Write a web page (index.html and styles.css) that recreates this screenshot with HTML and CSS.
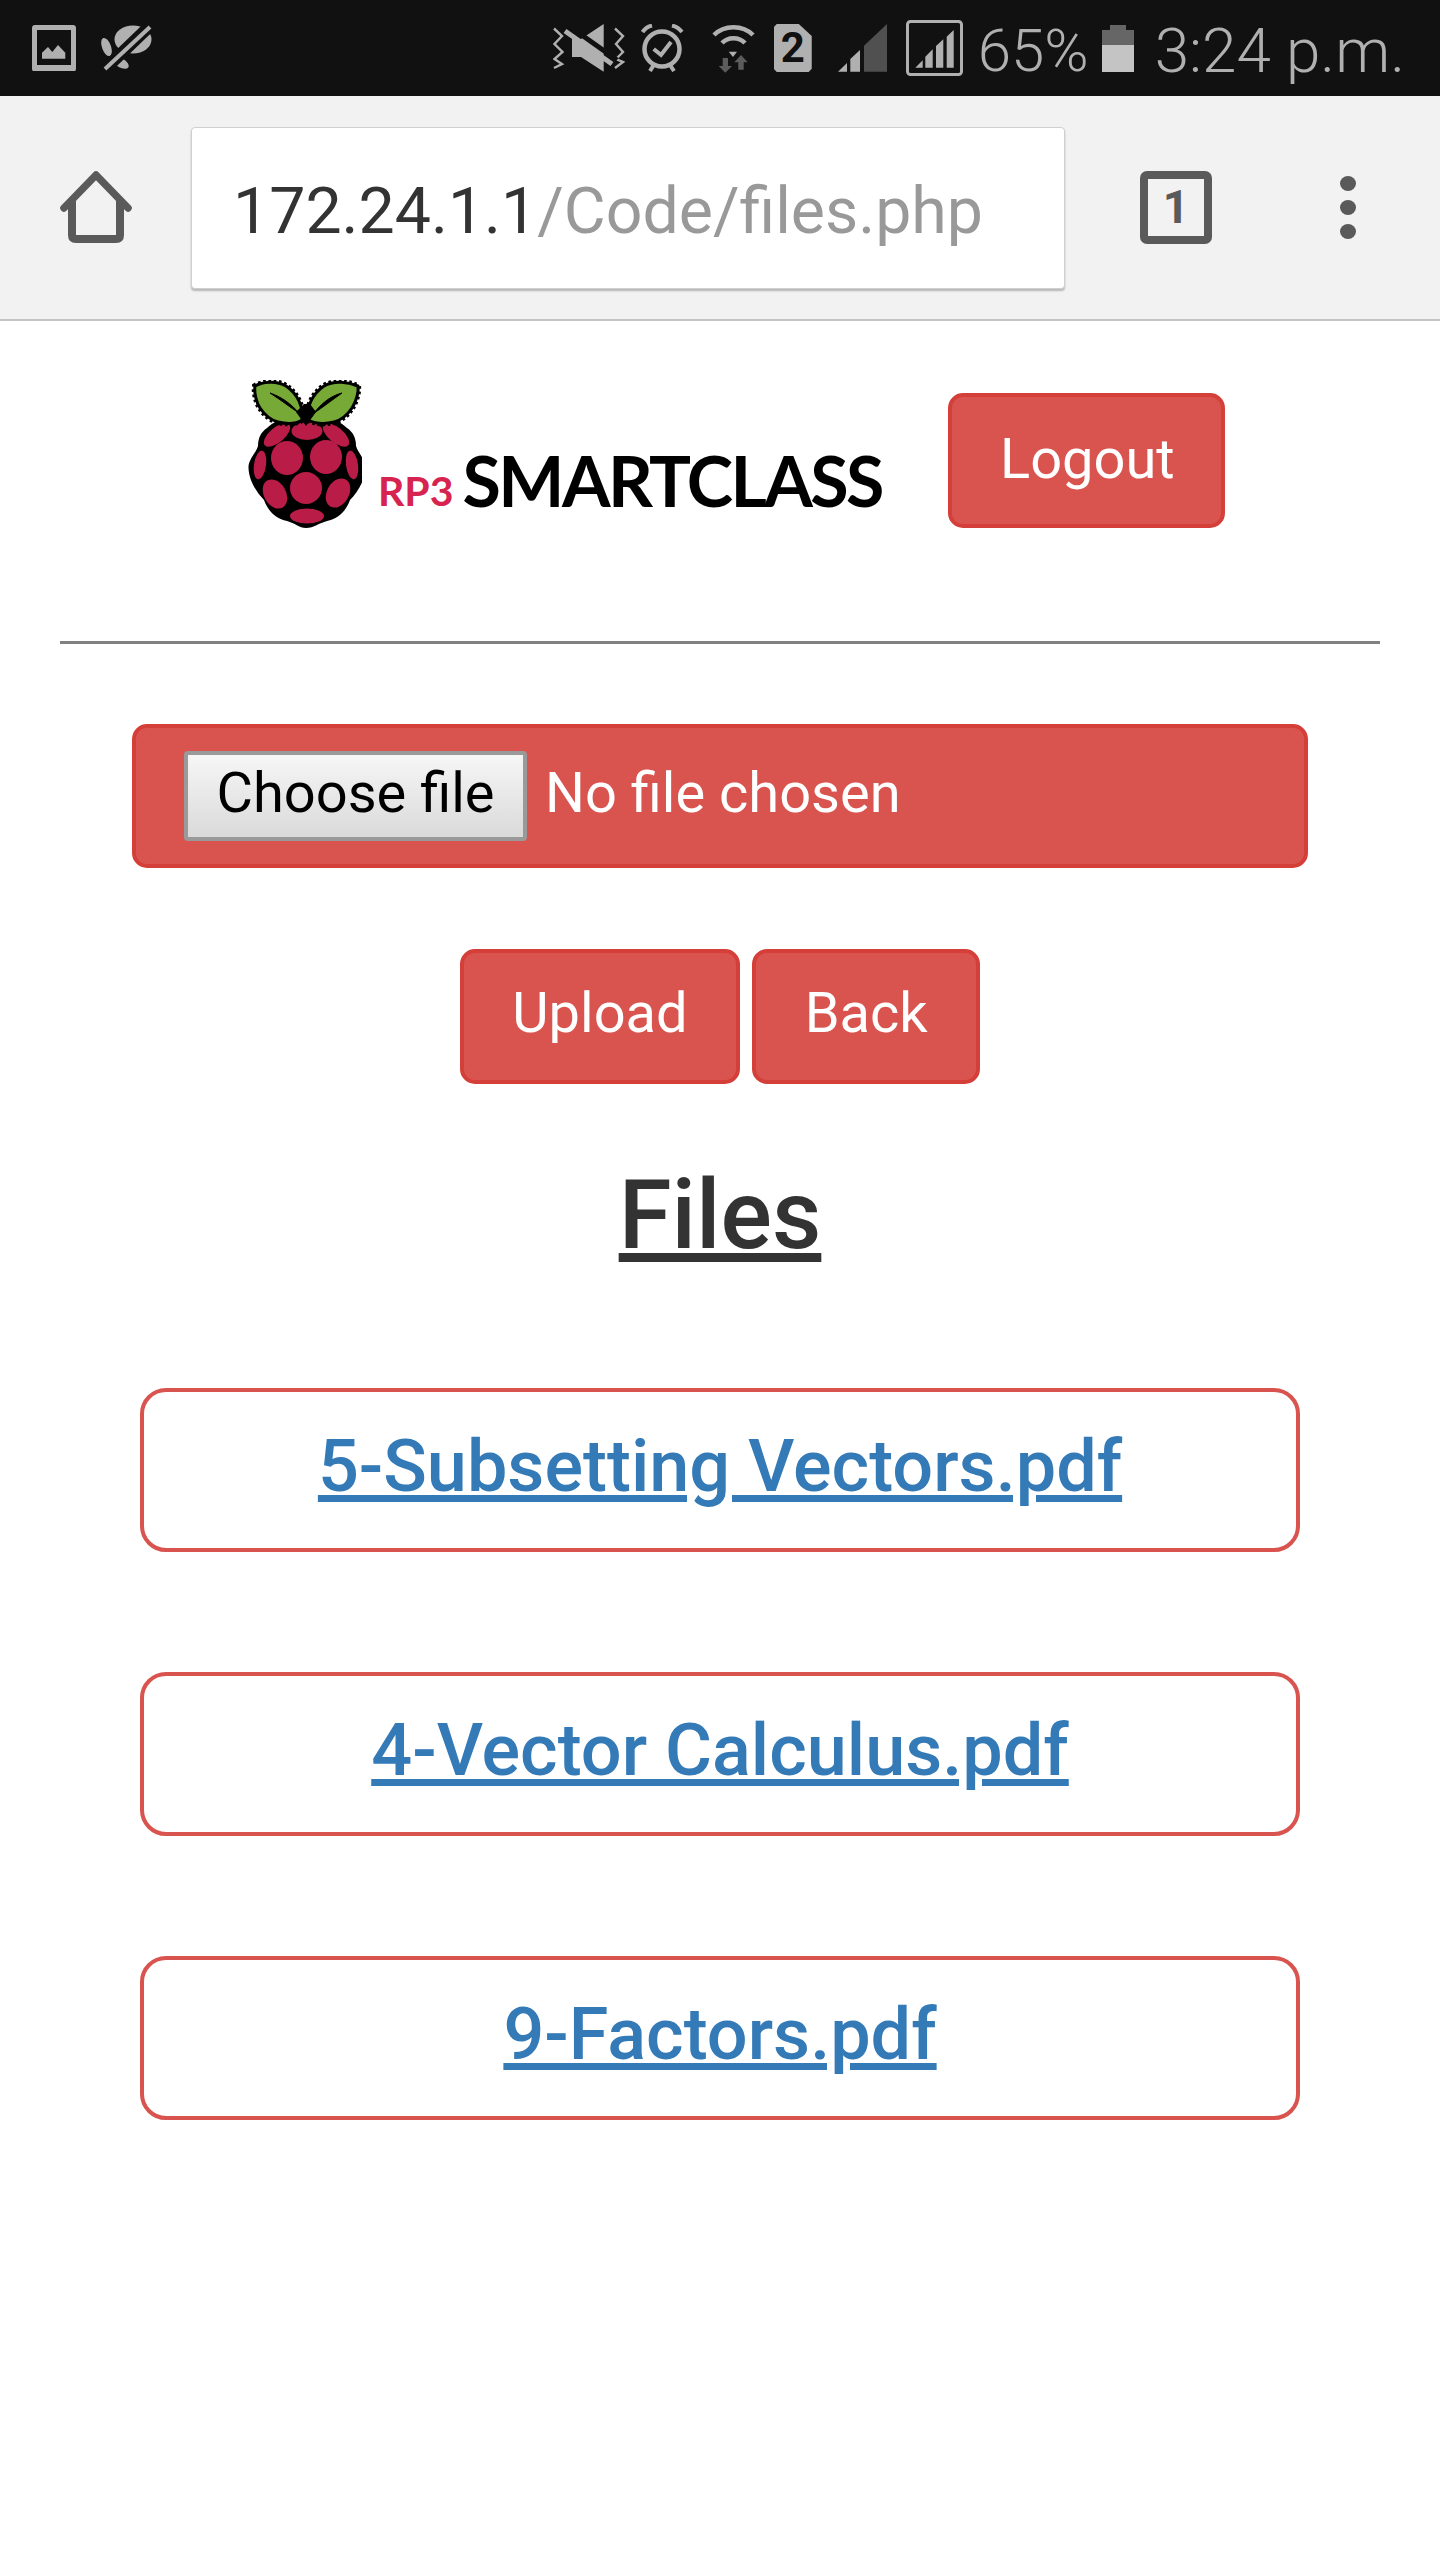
FILE: index.html
```html
<!DOCTYPE html>
<html lang="en">
<head>
<meta charset="utf-8">
<title>Files</title>
<link rel="stylesheet" href="styles.css">
</head>
<body>
<header class="status-bar">
  <div class="status-left">
    <svg class="ic ic-image" viewBox="0 0 44 46.700"><path fill-rule="evenodd" d="M3 0h38q3 0 3 3v40.700q0 3-3 3H3q-3 0-3-3V3q0-3 3-3zM5 5v35h34V5z" fill="#b0b0b0"/><path d="M10 33.700v-6L16 22l4.300 5L26 20l7.300 7.700v6z" fill="#b0b0b0"/></svg>
    <svg class="ic ic-leaf" viewBox="0 0 52 46.700"><ellipse cx="33" cy="14.500" rx="18.500" ry="14" fill="#b0b0b0"/><ellipse cx="6.500" cy="22" rx="4.500" ry="9.500" transform="rotate(-20 6.500 22)" fill="#b0b0b0"/><ellipse cx="21" cy="38" rx="8.500" ry="4.500" transform="rotate(30 21 38)" fill="#b0b0b0"/><path d="M2 47L54 -3" stroke="#111" stroke-width="12"/><path d="M5 44L50 2" stroke="#b0b0b0" stroke-width="4"/></svg>
  </div>
  <div class="status-right">
    <svg class="ic ic-mute" viewBox="0 0 72 48"><path d="M1 4.500L9 12 1.500 20l8 8-8 7L9 40l-8 4M62 4.500l8 7.500-7 8 7 8-7 7 7 3-8 6" fill="none" stroke="#b0b0b0" stroke-width="2.400"/><path d="M19 15h9L50.700 0v47.700L28 33h-9z" fill="#b0b0b0"/><path d="M16 2L64 36" stroke="#111" stroke-width="5"/><path d="M12 7L59 40" stroke="#b0b0b0" stroke-width="5"/></svg>
    <svg class="ic ic-alarm" viewBox="0 0 43 48"><circle cx="21" cy="25" r="17.500" fill="none" stroke="#b0b0b0" stroke-width="4.500"/><path d="M12.700 25l7.300 6 10-13" fill="none" stroke="#b0b0b0" stroke-width="4"/><path d="M1.500 8Q5 3 11 1.500M41 8Q37 3 31 1.500M12.700 41L9 47M29 41l4 6" fill="none" stroke="#b0b0b0" stroke-width="4"/></svg>
    <svg class="ic ic-wifi" viewBox="0 0 43 49"><path d="M2 11C12 .5 31 .5 41 11M10 19C16 12.500 27 12.500 33 19" fill="none" stroke="#b0b0b0" stroke-width="4.500"/><path d="M16.700 27.700h8.300L21 33z" fill="#b0b0b0"/><path d="M10.700 34H16v8h4l-6.700 6.700L6.700 42h4zM26.300 45.700v-7.400h-4L29 31l6.700 7.300h-4v7.400z" fill="#5c5c5c"/></svg>
    <span class="sim">2</span>
    <svg class="ic ic-signal" viewBox="0 0 49 47.700"><path d="M26 21.700L49 0v47.700H26z" fill="#505050"/><path d="M0 47.700L9 39v8.700zM12.300 47.700V35L22 26v21.700z" fill="#b0b0b0"/></svg>
    <svg class="ic ic-signal-box" viewBox="0 0 57 56"><rect x="1.500" y="1.500" width="54" height="53" rx="3" fill="none" stroke="#b0b0b0" stroke-width="3"/><path d="M9.300 47.700l7.400-7.400v7.400zM19.300 47.700v-11l7.400-7.400v18.400zM30 47.700V26l7.300-6.700v28.400zM40.700 47.700v-31l7-6.700v37.700z" fill="#b0b0b0"/></svg>
    <span class="status-text status-pct">65%</span>
    <span class="battery"><span class="battery-empty"></span></span>
    <span class="status-text status-time">3:24 p.m.</span>
  </div>
</header>

<nav class="toolbar">
  <svg class="home" viewBox="0 0 72 73"><path d="M4 37L36 4l32 33" fill="none" stroke="#5a5a5a" stroke-width="7.500" stroke-linecap="round" stroke-linejoin="round"/><path d="M12 30v34q0 4 4 4h40q4 0 4-4V30" fill="none" stroke="#5a5a5a" stroke-width="8"/></svg>
  <div class="url"><span class="url-host">172.24.1.1</span><span class="url-path">/Code/files.php</span></div>
  <span class="tabs">1</span>
  <span class="menu"><i></i><i></i><i></i></span>
</nav>

<main class="page">
  <div class="top-row">
    <div class="logo">
      <svg class="berry" viewBox="0 0 114 149">
        <path d="M58 148c-7 0-11-5-19-7-11-2-19-10-23-21C9 113 1 101 .5 88 0 80 8 73 10 66c0-8 3-14 9-18 6-6 14-9 22-11 6-2 12-2 18-2s12 0 18 2c8 2 16 5 22 11 6 4 9 10 9 18 2 7 10 14 9.500 22-.5 13-8.500 25-15.500 32-4 11-12 19-23 21-8 2-13 7-21 7z" fill="#000"/>
        <g fill="#b91c47">
          <ellipse cx="59" cy="51" rx="15.500" ry="9"/>
          <ellipse cx="29" cy="55" rx="16" ry="7.500" transform="rotate(-40 29 55)"/>
          <ellipse cx="88" cy="55" rx="16" ry="7.500" transform="rotate(40 88 55)"/>
          <ellipse cx="39" cy="78" rx="16" ry="17"/>
          <ellipse cx="78" cy="77" rx="16" ry="17"/>
          <ellipse cx="12" cy="85" rx="6" ry="14.500" transform="rotate(8 12 85)"/>
          <ellipse cx="104" cy="85" rx="6" ry="14.500" transform="rotate(-8 104 85)"/>
          <circle cx="58" cy="108" r="16"/>
          <ellipse cx="27" cy="114" rx="11" ry="15.500" transform="rotate(-30 27 114)"/>
          <ellipse cx="90" cy="113" rx="11" ry="15.500" transform="rotate(30 90 113)"/>
          <ellipse cx="59" cy="136" rx="17" ry="7.500"/>
        </g>
        <g>
          <path class="leaf-teeth" d="M54 40C56 28 50 14 38 6 28 0 14 2 7 6 6 12 8 22 12 28 16 34 22 40 30 42 38 44 48 44 54 40Z"/>
          <path class="leaf" d="M54 40C56 28 50 14 38 6 28 0 14 2 7 6 6 12 8 22 12 28 16 34 22 40 30 42 38 44 48 44 54 40Z"/>
          <path class="leaf-teeth" d="M60 40C58 28 64 14 76 6 86 0 100 2 110 6 111 12 108 22 104 28 100 34 94 40 86 42 78 44 68 44 60 40Z"/>
          <path class="leaf" d="M60 40C58 28 64 14 76 6 86 0 100 2 110 6 111 12 108 22 104 28 100 34 94 40 86 42 78 44 68 44 60 40Z"/>
          <path d="M22 13C34 17 43 24 51 33 43 28 33 20 22 13zM94 13C82 16 73 24 66 33 74 28 84 20 94 13z" fill="#000" stroke="#000"/>
          <path d="M48 32L58 46 68 32 62 24 56 24z" fill="#000"/>
        </g>
      </svg>
      <span class="rp3">RP3</span>
      <span class="brand">SMARTCLASS</span>
    </div>
    <button class="btn" type="button">Logout</button>
  </div>
  <hr class="rule">
  <form class="upload-form">
    <div class="file-bar">
      <button class="choose" type="button">Choose file</button>
      <span class="no-file">No file chosen</span>
    </div>
    <div class="actions">
      <button class="btn" type="button">Upload</button>
      <button class="btn" type="button">Back</button>
    </div>
  </form>
  <h3 class="title">Files</h3>
  <ul class="files">
    <li class="file-card"><a href="#">5-Subsetting Vectors.pdf</a></li>
    <li class="file-card"><a href="#">4-Vector Calculus.pdf</a></li>
    <li class="file-card"><a href="#">9-Factors.pdf</a></li>
  </ul>
</main>
</body>
</html>
```

FILE: styles.css
```css
* { box-sizing: border-box; }
html, body { margin: 0; padding: 0; }
body {
  width: 1440px;
  height: 2560px;
  background: #fff;
  font-family: Roboto, "Liberation Sans", sans-serif;
  color: #333;
  overflow: hidden;
}

/* status bar */
.status-bar {
  height: 96px;
  background: #111;
  display: flex;
  justify-content: space-between;
  align-items: center;
  padding: 0 35px 0 32px;
}
.status-left, .status-right { display: flex; align-items: center; }
.ic { display: block; flex: none; }
.ic-image { width: 44px; height: 46.700px; margin-right: 24px; }
.ic-leaf { width: 52px; height: 46.700px; }
.ic-mute { width: 72px; height: 48px; margin-right: 16px; }
.ic-alarm { width: 43px; height: 48px; margin-right: 28px; }
.ic-wifi { width: 43px; height: 49px; margin-right: 19px; }
.sim {
  width: 38px;
  height: 48px;
  margin-right: 26px;
  background: #b0b0b0;
  color: #111;
  clip-path: polygon(8% 0, 66% 0, 100% 25%, 100% 93%, 92% 100%, 8% 100%, 0 93%, 0 7%);
  font-size: 42px;
  font-weight: 700;
  line-height: 48px;
  text-align: center;
}
.ic-signal { width: 49px; height: 47.700px; margin-right: 19px; }
.ic-signal-box { width: 57px; height: 56px; margin-right: 15px; }
.status-text { color: #b0b0b0; font-size: 60px; font-weight: 300; line-height: 70px; padding-top: 5px; }
.status-time { font-size: 62px; }
.status-pct { margin-right: 13px; }
.battery {
  width: 32px;
  height: 42px;
  margin: 5px 21px 0 0;
  background: #c4c4c4;
  position: relative;
}
.battery::before {
  content: "";
  position: absolute;
  left: 8px;
  top: -5px;
  width: 16px;
  height: 5px;
  background: #666;
}
.battery-empty { display: block; height: 15px; background: #666; }

/* browser toolbar */
.toolbar {
  height: 225px;
  background: #f2f2f2;
  border-bottom: 2px solid #c4c4c4;
  display: flex;
  align-items: center;
  padding: 0 0 0 60px;
}
.home { width: 72px; height: 73px; flex: none; margin-right: 59px; }
.url {
  width: 874px;
  height: 162px;
  background: #fff;
  border: 1px solid #d0d0d0;
  border-radius: 4px;
  box-shadow: 0 2px 2px rgba(0,0,0,.25);
  padding-left: 41px;
  font-size: 64.400px;
  line-height: 166px;
  white-space: nowrap;
  margin-right: 75px;
}
.url-host { color: #333; }
.url-path { color: #999; }
.tabs {
  width: 72px;
  height: 73px;
  flex: none;
  border: 8px solid #5a5a5a;
  border-radius: 7px;
  color: #5a5a5a;
  font-size: 46px;
  font-weight: 700;
  line-height: 56px;
  text-align: center;
  margin-right: 128px;
}
.menu { display: flex; flex-direction: column; gap: 9px; }
.menu i { display: block; width: 16px; height: 15px; border-radius: 50%; background: #5a5a5a; }

/* page */
.page { padding: 59px 60px 0; }
.top-row { display: flex; align-items: flex-start; padding-left: 188px; }
.logo { display: flex; align-items: flex-end; width: 700px; height: 149px; }
.berry { width: 114px; height: 149px; flex: none; margin-right: 16px; }
.leaf { fill: #76a935; stroke: #000; stroke-width: 3; stroke-linejoin: round; }
.leaf-teeth { fill: #000; stroke: #000; stroke-width: 6; stroke-dasharray: 2.500 2.500; }
.rp3 {
  color: #d6234f;
  font-family: Lato, sans-serif;
  font-weight: 700;
  font-size: 41px;
  line-height: 50px;
  margin: 0 9px 13px 0;
}
.brand {
  color: #000;
  font-family: Lato, sans-serif;
  font-weight: 700;
  font-size: 70px;
  line-height: 80px;
  margin-bottom: 9px;
  letter-spacing: -2.600px;
}
.btn {
  height: 135px;
  padding: 0 46px 3px 48px;
  background: #d9534f;
  border: 4px solid #d43f3a;
  border-radius: 15px;
  color: #fff;
  font: 400 56px/1 Roboto, sans-serif;
  flex: none;
}
.actions .btn { padding: 0 48.500px 7px; }
.top-row .btn { margin-top: 13px; }
.rule { margin: 112px 0 0; border: 0; border-top: 3px solid #808080; }
.upload-form { margin: 80px 0 0; }
.file-bar {
  width: 1176px;
  height: 144px;
  margin-left: 72px;
  padding: 0 0 0 48px;
  background: #d9534f;
  border: 4px solid #d43f3a;
  border-radius: 15px;
  display: flex;
  align-items: center;
}
.choose {
  width: 343px;
  height: 90px;
  padding: 0 0 6px;
  background: linear-gradient(#f6f6f6, #dadada);
  border: 4px solid #9a9a9a;
  border-radius: 4px;
  color: #000;
  font: 400 56px/1 Roboto, sans-serif;
  margin-right: 18px;
}
.no-file { color: #fff; font-size: 56px; margin-bottom: 7px; }
.actions { display: flex; justify-content: center; gap: 12px; margin-top: 81px; }
.title {
  margin: 76px 0 0;
  text-align: center;
  font-size: 96px;
  font-weight: 500;
  line-height: 110px;
  text-decoration: underline;
}
.files {
  list-style: none;
  margin: 0;
  padding: 118px 0 0 80px;
  display: flex;
  flex-direction: column;
  gap: 120px;
}
.file-card {
  width: 1160px;
  height: 164px;
  border: 4px solid #d9534f;
  border-radius: 26px;
  text-align: center;
  font-size: 72px;
  font-weight: 500;
  line-height: 150px;
}
.file-card a { color: #337ab7; text-decoration: underline; }
```
